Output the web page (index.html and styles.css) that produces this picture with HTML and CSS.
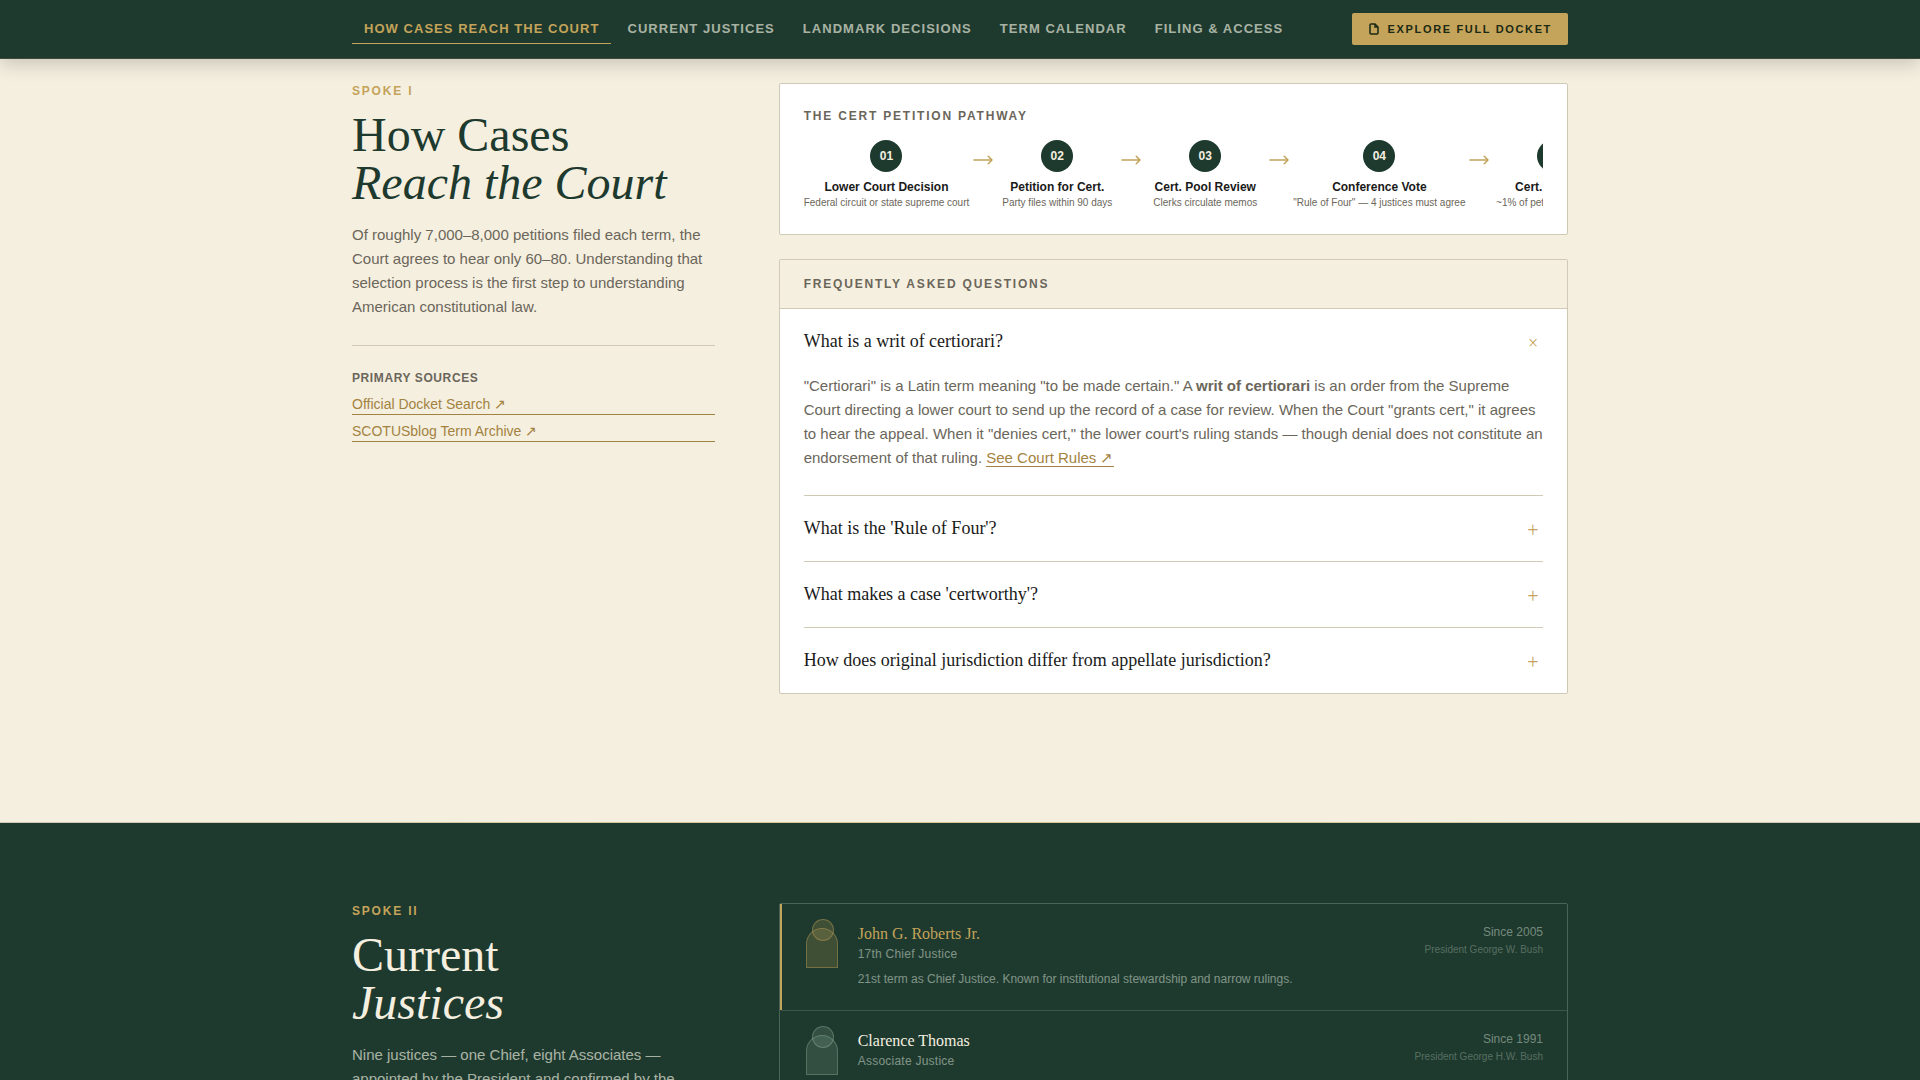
FILE: index.html
```html
<!DOCTYPE html>
<html lang="en">
<head>
    <meta charset="UTF-8">
    <meta name="viewport" content="width=device-width, initial-scale=1.0">
    <title>Supreme Court Guide</title>
    <link rel="stylesheet" href="styles.css">
</head>
<body>
    <header class="topbar">
        <div class="container topbar-inner">
            <nav class="nav" aria-label="Sections">
                <a class="nav-link active" href="#cases">How Cases Reach the Court</a>
                <a class="nav-link" href="#justices">Current Justices</a>
                <a class="nav-link" href="#decisions">Landmark Decisions</a>
                <a class="nav-link" href="#calendar">Term Calendar</a>
                <a class="nav-link" href="#filing">Filing &amp; Access</a>
            </nav>
            <a class="docket-btn" href="#docket">
                <svg class="docket-icon" viewBox="0 0 24 24" aria-hidden="true">
                    <path d="M14 2H6a2 2 0 0 0-2 2v16a2 2 0 0 0 2 2h12a2 2 0 0 0 2-2V8z"/>
                    <path d="M14 2v6h6"/>
                </svg>
                Explore Full Docket
            </a>
        </div>
    </header>

    <main>
        <section class="section section-light" id="cases">
            <div class="container section-grid">
                <div class="intro">
                    <p class="eyebrow">Spoke I</p>
                    <h2 class="title">How Cases<br><em>Reach the Court</em></h2>
                    <p class="lead">Of roughly 7,000–8,000 petitions filed each term, the Court agrees to hear only 60–80. Understanding that selection process is the first step to understanding American constitutional law.</p>
                    <div class="sources">
                        <h3 class="sources-title">Primary Sources</h3>
                        <a class="source-link" href="#docket-search">Official Docket Search ↗</a>
                        <a class="source-link" href="#archive">SCOTUSblog Term Archive ↗</a>
                    </div>
                </div>

                <div class="panels">
                    <div class="card pathway">
                        <h3 class="card-title">The Cert Petition Pathway</h3>
                        <div class="steps">
                            <div class="step">
                                <span class="step-num">01</span>
                                <span class="step-name">Lower Court Decision</span>
                                <span class="step-note">Federal circuit or state supreme court</span>
                            </div>
                            <svg class="step-arrow" viewBox="0 0 24 24" aria-hidden="true"><path d="M17.25 8.25 21 12l-3.75 3.75M21 12H3"/></svg>
                            <div class="step">
                                <span class="step-num">02</span>
                                <span class="step-name">Petition for Cert.</span>
                                <span class="step-note">Party files within 90 days</span>
                            </div>
                            <svg class="step-arrow" viewBox="0 0 24 24" aria-hidden="true"><path d="M17.25 8.25 21 12l-3.75 3.75M21 12H3"/></svg>
                            <div class="step">
                                <span class="step-num">03</span>
                                <span class="step-name">Cert. Pool Review</span>
                                <span class="step-note">Clerks circulate memos</span>
                            </div>
                            <svg class="step-arrow" viewBox="0 0 24 24" aria-hidden="true"><path d="M17.25 8.25 21 12l-3.75 3.75M21 12H3"/></svg>
                            <div class="step">
                                <span class="step-num">04</span>
                                <span class="step-name">Conference Vote</span>
                                <span class="step-note">"Rule of Four" — 4 justices must agree</span>
                            </div>
                            <svg class="step-arrow" viewBox="0 0 24 24" aria-hidden="true"><path d="M17.25 8.25 21 12l-3.75 3.75M21 12H3"/></svg>
                            <div class="step">
                                <span class="step-num">05</span>
                                <span class="step-name">Cert. Granted</span>
                                <span class="step-note">~1% of petitions accepted</span>
                            </div>
                        </div>
                    </div>

                    <div class="card">
                        <div class="faq-header">
                            <h3 class="card-title">Frequently Asked Questions</h3>
                        </div>
                        <div class="faq-list">
                            <div class="faq-item">
                                <button class="faq-question" type="button" aria-expanded="true">
                                    <span>What is a writ of certiorari?</span>
                                    <span class="faq-icon">×</span>
                                </button>
                                <div class="faq-answer">
                                    "Certiorari" is a Latin term meaning "to be made certain." A <strong>writ of certiorari</strong> is an order from the Supreme Court directing a lower court to send up the record of a case for review. When the Court "grants cert," it agrees to hear the appeal. When it "denies cert," the lower court's ruling stands — though denial does not constitute an endorsement of that ruling. <a class="text-link" href="#rules">See Court Rules ↗</a>
                                </div>
                            </div>
                            <div class="faq-item">
                                <button class="faq-question" type="button" aria-expanded="false">
                                    <span>What is the 'Rule of Four'?</span>
                                    <span class="faq-icon">+</span>
                                </button>
                            </div>
                            <div class="faq-item">
                                <button class="faq-question" type="button" aria-expanded="false">
                                    <span>What makes a case 'certworthy'?</span>
                                    <span class="faq-icon">+</span>
                                </button>
                            </div>
                            <div class="faq-item">
                                <button class="faq-question" type="button" aria-expanded="false">
                                    <span>How does original jurisdiction differ from appellate jurisdiction?</span>
                                    <span class="faq-icon">+</span>
                                </button>
                            </div>
                        </div>
                    </div>
                </div>
            </div>
        </section>

        <div class="divider"></div>

        <section class="section section-dark" id="justices">
            <div class="container section-grid">
                <div class="intro">
                    <p class="eyebrow">Spoke II</p>
                    <h2 class="title">Current<br><em>Justices</em></h2>
                    <p class="lead">Nine justices — one Chief, eight Associates — appointed by the President and confirmed by the Senate.</p>
                </div>

                <div class="panels">
                    <div class="justices">
                        <article class="justice chief">
                            <div class="portrait"></div>
                            <div class="justice-info">
                                <h3 class="justice-name">John G. Roberts Jr.</h3>
                                <p class="justice-role">17th Chief Justice</p>
                                <p class="justice-bio">21st term as Chief Justice. Known for institutional stewardship and narrow rulings.</p>
                            </div>
                            <div class="justice-meta">
                                <p class="since">Since 2005</p>
                                <p class="president">President George W. Bush</p>
                            </div>
                        </article>
                        <article class="justice">
                            <div class="portrait"></div>
                            <div class="justice-info">
                                <h3 class="justice-name">Clarence Thomas</h3>
                                <p class="justice-role">Associate Justice</p>
                            </div>
                            <div class="justice-meta">
                                <p class="since">Since 1991</p>
                                <p class="president">President George H.W. Bush</p>
                            </div>
                        </article>
                    </div>
                </div>
            </div>
        </section>
    </main>
</body>
</html>
```
FILE: styles.css
```css
:root {
    --green: #1e3a2e;
    --cream: #f5efe0;
    --gold: #c4a35a;
    --gold-dark: #a38341;
    --ink: #1a1a1a;
    --muted: #6b665a;
    --line: #cfc9b6;
    --sans: "Liberation Sans", Arial, sans-serif;
    --serif: "Liberation Serif", "Times New Roman", serif;
}

* {
    margin: 0;
    padding: 0;
    box-sizing: border-box;
}

html {
    scrollbar-width: none;
}

body {
    font-family: var(--sans);
    background: var(--cream);
    color: var(--ink);
}

a {
    text-decoration: none;
}

.container {
    max-width: 1280px;
    margin: 0 auto;
    padding: 0 32px;
}

/* Top bar */
.topbar {
    position: sticky;
    top: 0;
    z-index: 10;
    background: var(--green);
    border-bottom: 1px solid #3d4a35;
    box-shadow: 0 4px 20px rgba(0, 0, 0, 0.2);
}

.topbar-inner {
    display: flex;
    align-items: center;
    justify-content: space-between;
    min-height: 58px;
}

.nav {
    display: flex;
    gap: 4px;
}

.nav-link {
    padding: 7px 12px 6px;
    border-bottom: 1px solid transparent;
    color: rgba(238, 240, 224, 0.68);
    font-size: 13px;
    line-height: 16px;
    font-weight: 600;
    letter-spacing: 0.08em;
    text-transform: uppercase;
}

.nav-link.active {
    color: var(--gold);
    border-bottom-color: var(--gold);
}

.docket-btn {
    display: flex;
    align-items: center;
    gap: 8px;
    padding: 8px 16px;
    border-radius: 2px;
    background: var(--gold);
    color: #1a2a14;
    font-size: 11px;
    line-height: 16px;
    font-weight: 700;
    letter-spacing: 0.15em;
    text-transform: uppercase;
}

.docket-icon {
    width: 12px;
    height: 12px;
    fill: none;
    stroke: currentColor;
    stroke-width: 3;
}

/* Sections */
.section-light {
    padding: 24px 0 128px;
}

.section-dark {
    padding: 80px 0;
    background: var(--green);
}

.divider {
    height: 1px;
    background: linear-gradient(90deg, var(--line), #d9c68f 50%, var(--line));
}

.section-grid {
    display: grid;
    grid-template-columns: repeat(12, 1fr);
    column-gap: 64px;
}

.intro {
    grid-column: span 4;
}

.panels {
    grid-column: span 8;
    display: flex;
    flex-direction: column;
    gap: 24px;
    min-width: 0;
}

.eyebrow {
    margin-bottom: 12px;
    color: var(--gold);
    font-size: 12px;
    line-height: 16px;
    font-weight: 600;
    letter-spacing: 0.15em;
    text-transform: uppercase;
}

.title {
    margin-bottom: 16px;
    color: var(--green);
    font-family: var(--serif);
    font-size: 48px;
    line-height: 48px;
    font-weight: 400;
}

.lead {
    margin-bottom: 26px;
    color: var(--muted);
    font-size: 15px;
    line-height: 24px;
}

.section-dark .title {
    color: var(--cream);
}

.section-dark .lead {
    color: rgba(238, 240, 224, 0.68);
}

.sources {
    display: flex;
    flex-direction: column;
    gap: 6px;
    padding-top: 24px;
    border-top: 1px solid var(--line);
}

.sources-title {
    margin-bottom: 2px;
    color: var(--muted);
    font-size: 12px;
    line-height: 16px;
    font-weight: 600;
    letter-spacing: 0.05em;
    text-transform: uppercase;
}

.source-link {
    border-bottom: 1px solid var(--gold-dark);
    color: var(--gold-dark);
    font-size: 14px;
    line-height: 20px;
}

/* Cards */
.card {
    background: #fff;
    border: 1px solid var(--line);
    border-radius: 2px;
}

.card-title {
    color: var(--muted);
    font-size: 12px;
    line-height: 16px;
    font-weight: 600;
    letter-spacing: 0.15em;
    text-transform: uppercase;
}

.pathway {
    padding: 24px;
}

.pathway .card-title {
    margin-bottom: 16px;
}

.steps {
    display: flex;
    align-items: flex-start;
    overflow-x: auto;
    scrollbar-width: none;
}

.step {
    display: flex;
    flex-direction: column;
    align-items: center;
    flex-shrink: 0;
    min-width: 120px;
}

.step-num {
    display: flex;
    align-items: center;
    justify-content: center;
    width: 32px;
    height: 32px;
    margin-bottom: 8px;
    border-radius: 50%;
    background: var(--green);
    color: var(--cream);
    font-size: 12px;
    font-weight: 700;
}

.step-name {
    font-size: 12px;
    line-height: 15px;
    font-weight: 600;
    white-space: nowrap;
}

.step-note {
    color: var(--muted);
    font-size: 10px;
    line-height: 15px;
    white-space: nowrap;
}

.step-arrow {
    flex-shrink: 0;
    width: 24px;
    height: 24px;
    margin: 8px 2px 0;
    fill: none;
    stroke: var(--gold);
    stroke-width: 1.5;
    stroke-linecap: round;
    stroke-linejoin: round;
}

/* FAQ */
.faq-header {
    padding: 16px 24px;
    background: var(--cream);
    border-bottom: 1px solid var(--line);
}

.faq-list {
    padding: 0 24px;
}

.faq-item + .faq-item {
    border-top: 1px solid var(--line);
}

.faq-question {
    display: flex;
    align-items: center;
    justify-content: space-between;
    width: 100%;
    padding: 20px 0;
    border: 0;
    background: none;
    color: var(--ink);
    font-family: var(--serif);
    font-size: 18px;
    line-height: 25px;
    text-align: left;
    cursor: pointer;
}

.faq-icon {
    align-self: flex-end;
    width: 20px;
    color: var(--gold);
    font-size: 20px;
    line-height: 21px;
    text-align: center;
}

.faq-question[aria-expanded="true"] .faq-icon {
    font-size: 18px;
}

.faq-answer {
    padding-bottom: 25px;
    color: var(--muted);
    font-size: 15px;
    line-height: 24px;
}

.text-link {
    border-bottom: 1px solid var(--gold-dark);
    color: var(--gold-dark);
}

/* Justices */
.justices {
    border: 1px solid rgba(168, 200, 180, 0.3);
    border-radius: 2px;
}

.justice {
    display: flex;
    gap: 20px;
    padding: 20px 24px;
    border-left: 2px solid transparent;
}

.justice + .justice {
    border-top: 1px solid rgba(168, 200, 180, 0.2);
}

.justice.chief {
    border-left-color: var(--gold);
}

.portrait {
    position: relative;
    flex-shrink: 0;
    width: 32px;
    height: 40px;
    margin-top: 4px;
    border: 1px solid rgba(168, 200, 180, 0.3);
    border-radius: 16px 16px 0 0;
    background: rgba(168, 200, 180, 0.15);
}

/* head over the shoulders */
.portrait::before {
    content: '';
    position: absolute;
    top: -10px;
    left: 5px;
    width: 20px;
    height: 20px;
    border: 1px solid rgba(168, 200, 180, 0.3);
    border-radius: 50%;
    background: rgba(168, 200, 180, 0.15);
}

.chief .portrait,
.chief .portrait::before {
    border-color: rgba(196, 163, 90, 0.4);
    background: rgba(196, 163, 90, 0.2);
}

.justice-info {
    flex: 1;
}

.justice-name {
    margin-bottom: 2px;
    color: var(--cream);
    font-family: var(--serif);
    font-size: 16px;
    line-height: 20px;
    font-weight: 400;
}

.chief .justice-name {
    color: var(--gold);
}

.justice-role {
    color: rgba(225, 238, 224, 0.5);
    font-size: 12px;
    line-height: 16px;
    letter-spacing: 0.02em;
}

.justice-bio {
    margin-top: 8px;
    padding-bottom: 2px;
    color: rgba(225, 238, 224, 0.5);
    font-size: 12px;
    line-height: 18px;
}

.justice-meta {
    text-align: right;
}

.since {
    color: rgba(225, 238, 224, 0.45);
    font-size: 12px;
    line-height: 16px;
}

.president {
    margin-top: 2px;
    color: rgba(225, 238, 224, 0.3);
    font-size: 10px;
    line-height: 16px;
}
```
